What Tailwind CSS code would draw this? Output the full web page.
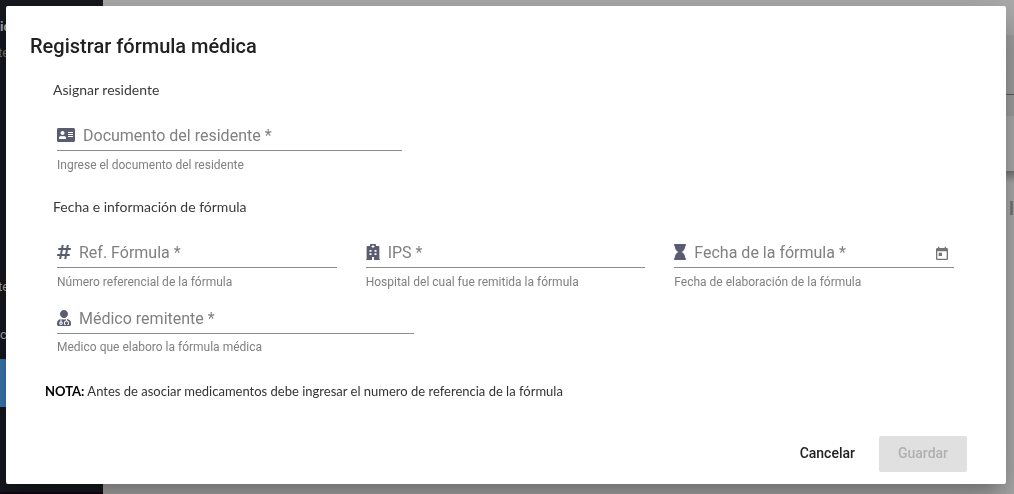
<!DOCTYPE html>
<html lang="es">
<head>
<meta charset="utf-8">
<meta name="viewport" content="width=device-width, initial-scale=1">
<title>Registrar fórmula médica</title>
<script src="https://cdn.jsdelivr.net/npm/@tailwindcss/browser@4"></script>
</head>
<body class="min-h-screen bg-[#acacac] font-[Roboto,sans-serif]">

<!-- Page behind the dialog -->
<div class="flex h-screen overflow-hidden" aria-hidden="true">
  <div class="flex w-[103px] shrink-0 flex-col border-b-2 border-[#150616] bg-[#16181e] text-[13px] leading-4 text-[#aaaaac]">
    <div class="mt-[19px] font-bold">ic</div>
    <div class="-ml-0.5 mt-[10px] text-[#77787b]">te</div>
    <div class="-ml-0.5 mt-[218px]">te</div>
    <div class="mt-8">c</div>
    <div class="mt-4 h-12 bg-[#3b78b2]"></div>
  </div>
  <div class="flex flex-1 flex-col items-end">
    <div class="mt-[19px] h-4 w-5 bg-[#aaaaaa]"></div>
    <div class="h-[59px] w-5 bg-[#a0a0a0]"></div>
    <div class="h-px w-5 bg-[#5c5c5c]"></div>
    <div class="h-[21px] w-5 bg-[#a0a0a0]"></div>
    <div class="h-[55px] w-5 bg-[#acacac]"></div>
    <div class="h-3 w-5 bg-linear-to-b from-[#757575] to-[#acacac]"></div>
    <div class="mt-[18px] mr-[1px] h-[14px] w-[3px] bg-[#7c7c7c]"></div>
  </div>
</div>

<div class="fixed inset-0 px-2 pt-[6px] pb-[10px] pl-[6px]">
<main role="dialog" aria-labelledby="titulo" class="rounded-xs bg-white px-6 pt-6 pb-3 shadow-[0_11px_15px_-7px_rgba(0,0,0,0.2),0_9px_46px_8px_rgba(0,0,0,0.12),0_24px_38px_3px_rgba(0,0,0,0.14)]">
  <h1 id="titulo" class="text-xl leading-8 font-medium text-[#212121]">Registrar fórmula médica</h1>
  <form>
    <div class="pr-7 pl-[27px]">
      <h2 class="mt-[18px] -ml-1 font-[Lato,sans-serif] text-sm leading-5 text-[#3a3a3a]">Asignar residente</h2>
      <div class="mt-6 w-[345px] max-w-full">
        <div class="flex h-[27px] items-start gap-2 border-b border-[#8c8c8c]">
          <svg class="mt-[3px] h-4 w-[18px] shrink-0 fill-[#5a5d70]" viewBox="0 0 576 512" aria-hidden="true"><path d="M528 32H48C21.500 32 0 53.500 0 80v352c0 26.500 21.500 48 48 48h480c26.500 0 48-21.500 48-48V80c0-26.500-21.500-48-48-48zm-352 96c35.300 0 64 28.700 64 64s-28.700 64-64 64-64-28.700-64-64 28.700-64 64-64zm112 236.800c0 10.600-10 19.200-22.400 19.200H86.400C74 384 64 375.400 64 364.800v-19.200c0-31.800 30.100-57.600 67.200-57.600h5c12.300 5.100 25.700 8 39.800 8s27.600-2.900 39.800-8h5c37.100 0 67.200 25.800 67.200 57.600v19.200zM512 312c0 4.400-3.600 8-8 8H360c-4.400 0-8-3.600-8-8v-16c0-4.400 3.600-8 8-8h144c4.400 0 8 3.600 8 8v16zm0-64c0 4.400-3.600 8-8 8H360c-4.400 0-8-3.600-8-8v-16c0-4.400 3.600-8 8-8h144c4.400 0 8 3.600 8 8v16zm0-64c0 4.400-3.600 8-8 8H360c-4.400 0-8-3.600-8-8v-16c0-4.400 3.600-8 8-8h144c4.400 0 8 3.600 8 8v16z"/></svg>
          <label for="documento" class="shrink-0 text-base leading-6 text-[#808080]">Documento del residente *</label>
          <input id="documento" type="text" required class="h-6 min-w-0 flex-1 outline-none">
        </div>
        <p class="mt-[6px] text-xs leading-4 text-[#808080]">Ingrese el documento del residente</p>
      </div>

      <h2 class="mt-6 -ml-1 font-[Lato,sans-serif] text-sm leading-5 text-[#3a3a3a]">Fecha e información de fórmula</h2>
      <div class="mt-6 grid grid-cols-3 gap-x-[29px]">
        <div>
          <div class="flex h-[27px] items-start gap-2 border-b border-[#8c8c8c]">
            <svg class="mt-[3px] h-4 w-[14px] shrink-0 fill-[#5a5d70]" viewBox="0 0 448 512" aria-hidden="true"><path d="M440.667 182.109l7.143-40c1.313-7.355-4.342-14.109-11.813-14.109h-74.810l14.623-81.891C377.123 38.754 371.468 32 363.997 32h-40.632a12 12 0 0 0-11.813 9.891L296.175 128H197.540l14.623-81.891C213.477 38.754 207.822 32 200.350 32h-40.632a12 12 0 0 0-11.813 9.891L132.528 128H53.432a12 12 0 0 0-11.813 9.891l-7.143 40C33.163 185.246 38.818 192 46.289 192h74.810L98.242 320H19.146a12 12 0 0 0-11.813 9.891l-7.143 40C-1.123 377.246 4.532 384 12.003 384h74.810L72.190 465.891C70.877 473.246 76.532 480 84.003 480h40.632a12 12 0 0 0 11.813-9.891L151.826 384h98.634l-14.623 81.891C234.523 473.246 240.178 480 247.650 480h40.632a12 12 0 0 0 11.813-9.891L315.472 384h79.096a12 12 0 0 0 11.813-9.891l7.143-40c1.313-7.355-4.342-14.109-11.813-14.109h-74.810l22.857-128h79.096a12 12 0 0 0 11.813-9.891zM261.889 320h-98.634l22.857-128h98.634l-22.857 128z"/></svg>
            <label for="referencia" class="shrink-0 text-base leading-6 text-[#808080]">Ref. Fórmula *</label>
            <input id="referencia" type="text" required class="h-6 min-w-0 flex-1 outline-none">
          </div>
          <p class="mt-[6px] text-xs leading-4 text-[#808080]">Número referencial de la fórmula</p>
        </div>
        <div>
          <div class="flex h-[27px] items-start gap-2 border-b border-[#8c8c8c]">
            <svg class="mt-[3px] h-4 w-[14px] shrink-0 fill-[#5a5d70]" viewBox="0 0 448 512" aria-hidden="true"><path fill-rule="evenodd" d="M0 484h20V88c0-13 11-24 24-24h84V24c0-13 11-24 24-24h144c13 0 24 11 24 24v40h84c13 0 24 11 24 24v396h20v28H256v-96h-64v96H0zM208 32v32h-32v32h32v32h32V96h32V64h-32V32zM112 192v56h64v-56zm160 0v56h64v-56zM112 296v56h64v-56zm160 0v56h64v-56z"/></svg>
            <label for="ips" class="shrink-0 text-base leading-6 text-[#808080]">IPS *</label>
            <input id="ips" type="text" required class="h-6 min-w-0 flex-1 outline-none">
          </div>
          <p class="mt-[6px] text-xs leading-4 text-[#808080]">Hospital del cual fue remitida la fórmula</p>
        </div>
        <div>
          <div class="flex h-[27px] items-start gap-2 border-b border-[#8c8c8c]">
            <svg class="mt-[3px] h-4 w-3 shrink-0 fill-[#5a5d70]" viewBox="0 0 384 512" aria-hidden="true"><path d="M360 0H24C10.745 0 0 10.745 0 24v16c0 13.255 10.745 24 24 24 0 90.965 51.016 167.734 120.842 192C75.016 280.266 24 357.035 24 448c-13.255 0-24 10.745-24 24v16c0 13.255 10.745 24 24 24h336c13.255 0 24-10.745 24-24v-16c0-13.255-10.745-24-24-24 0-90.965-51.016-167.734-120.842-192C308.984 231.734 360 154.965 360 64c13.255 0 24-10.745 24-24V24c0-13.255-10.745-24-24-24z"/></svg>
            <label for="fecha" class="shrink-0 text-base leading-6 text-[#808080]">Fecha de la fórmula *</label>
            <input id="fecha" type="text" required class="h-6 min-w-0 flex-1 outline-none">
            <button type="button" aria-label="Abrir calendario" class="mt-[5px] mr-1 shrink-0"><svg class="h-4 w-4 fill-[#757575]" viewBox="0 0 24 24" aria-hidden="true"><path d="M19 3h-1V1h-2v2H8V1H6v2H5c-1.110 0-1.990.9-1.990 2L3 19c0 1.100.89 2 2 2h14c1.100 0 2-.9 2-2V5c0-1.100-.9-2-2-2zm0 16H5V8h14v11zM7 10h5v5H7z"/></svg></button>
          </div>
          <p class="mt-[6px] text-xs leading-4 text-[#808080]">Fecha de elaboración de la fórmula</p>
        </div>
      </div>

      <div class="mt-[17px] w-[357px] max-w-full">
        <div class="flex h-[27px] items-start gap-2 border-b border-[#8c8c8c]">
          <svg class="mt-[3px] h-4 w-[14px] shrink-0 fill-[#5a5d70]" viewBox="0 0 448 512" aria-hidden="true"><path d="M224 256c70.700 0 128-57.300 128-128S294.700 0 224 0 96 57.300 96 128s57.300 128 128 128zM104 424c0 13.300 10.700 24 24 24s24-10.700 24-24-10.700-24-24-24-24 10.700-24 24zm216-135.400v49c36.500 7.400 64 39.800 64 78.400v41.700c0 7.600-5.400 14.200-12.900 15.700l-32.200 6.400c-4.300.9-8.500-1.900-9.400-6.300l-3.100-15.700c-.9-4.300 1.900-8.600 6.300-9.400l19.300-3.900V416c0-62.800-96-65.100-96 1.900v26.700l19.300 3.900c4.300.9 7.100 5.100 6.300 9.400l-3.100 15.700c-.9 4.300-5.100 7.100-9.400 6.300l-31.200-4.200c-7.900-1.100-13.800-7.800-13.800-15.900V416c0-38.600 27.500-70.900 64-78.400v-45.200c-2.200.7-4.400 1.100-6.600 1.900-18 6.300-37.300 9.800-57.400 9.800s-39.400-3.500-57.400-9.800c-7.400-2.600-14.900-4.200-22.600-5.200v81.600c23.100 6.900 40 28.100 40 53.400 0 30.900-25.100 56-56 56s-56-25.100-56-56c0-25.300 16.900-46.500 40-53.400v-80.400C48.500 301 0 355.800 0 422.400v44.800C0 491.900 20.100 512 44.800 512h358.400c24.700 0 44.800-20.100 44.800-44.800v-44.800c0-72-56.800-130.300-128-133.800z"/></svg>
          <label for="medico" class="shrink-0 text-base leading-6 text-[#808080]">Médico remitente *</label>
          <input id="medico" type="text" required class="h-6 min-w-0 flex-1 outline-none">
        </div>
        <p class="mt-[5px] text-xs leading-4 text-[#808080]">Medico que elaboro la fórmula médica</p>
      </div>
    </div>

    <p class="mt-[26px] ml-[15px] font-[Lato,sans-serif] text-[13px] leading-5 text-[#333333]"><strong class="font-bold text-black">NOTA:</strong> Antes de asociar medicamentos debe ingresar el numero de referencia de la fórmula</p>

    <div class="mt-[35px] mr-[15px] flex justify-end gap-2 text-sm font-medium">
      <button type="button" class="h-9 rounded-sm px-4 pb-0.5 text-[#212121]">Cancelar</button>
      <button type="submit" disabled class="h-9 w-[88px] rounded-xs bg-[#e0e0e0] pb-0.5 text-[#b0b0b0]">Guardar</button>
    </div>
  </form>
</main>
</div>
</body>
</html>
